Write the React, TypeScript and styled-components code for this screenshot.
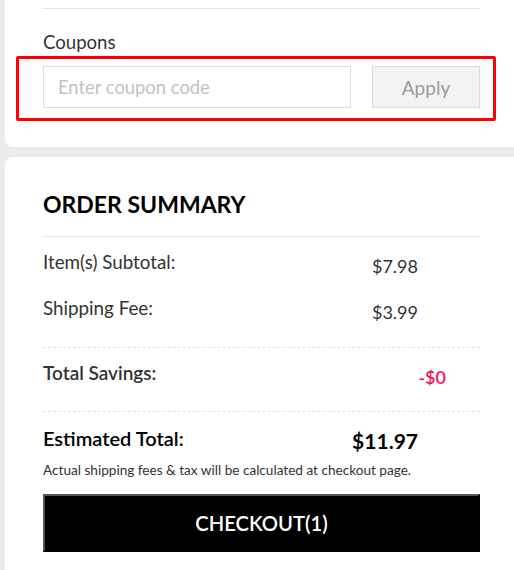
import React from "react";
import styled, { createGlobalStyle } from "styled-components";

const Global = createGlobalStyle`
  html, body { margin: 0; padding: 0; background: #ebebeb; }
  body { font-family: "Lato", "Open Sans", sans-serif; color: #333; }
  * { box-sizing: border-box; }
`;

const Page = styled.div`
  display: flex;
  flex-direction: column;
  gap: 10px;
  padding-left: 5px;
  width: 514px;
  height: 570px;
  overflow: hidden;
`;

const Card = styled.section<{ $top?: boolean }>`
  background: #fff;
  flex: ${(p) => (p.$top ? "0 0 auto" : "1 0 auto")};
  border-radius: ${(p) => (p.$top ? "0 0 0 8px" : "8px 0 0 0")};
  padding: ${(p) => (p.$top ? "8px 34px 39px 38px" : "34px 34px 20px 38px")};
`;

const Divider = styled.div<{ $dashed?: boolean }>`
  border-top: 1px ${(p) => (p.$dashed ? "dashed" : "solid")} #e2e2e2;
`;

const Label = styled.div`
  font-size: 18.6px;
  line-height: 24px;
  color: #333;
  margin: 21px 0 12px;
`;

const CouponRow = styled.div`
  position: relative;
  display: flex;
  gap: 21px;
  height: 42px;
`;

const Highlight = styled.div`
  position: absolute;
  left: -27px;
  right: -16px;
  top: -10px;
  bottom: -13px;
  border: 3px solid #ff0000;
  border-radius: 2px;
  pointer-events: none;
`;

const Input = styled.input`
  flex: 1;
  height: 42px;
  border: 1px solid #dcdcdc;
  padding: 0 14px;
  font-family: inherit;
  font-size: 18.4px;
  outline: none;
  &::placeholder { color: #c2c2c2; }
`;

const ApplyButton = styled.button`
  width: 108px;
  height: 42px;
  background: #f3f3f3;
  border: 1px solid #dcdcdc;
  color: #9a9a9a;
  font-family: inherit;
  font-size: 19px;
  padding: 0;
`;

const Title = styled.h2`
  margin: 0 0 19px;
  font-size: 23px;
  line-height: 26px;
  font-weight: 700;
  color: #000;
`;

const Row = styled.div<{ $pad: number }>`
  display: flex;
  justify-content: space-between;
  align-items: flex-start;
  padding-top: ${(p) => p.$pad}px;
`;

const RowLabel = styled.span<{ $strong?: boolean }>`
  font-size: ${(p) => (p.$strong ? 19 : 18.8)}px;
  line-height: 22px;
  font-weight: ${(p) => (p.$strong ? 600 : 400)};
  color: #333;
`;

const RowValue = styled.span<{ $right: number; $red?: boolean }>`
  font-size: 18px;
  line-height: 22px;
  margin-top: 4px;
  margin-right: ${(p) => p.$right}px;
  color: ${(p) => (p.$red ? "#fb0f4e" : "#333")};
  font-weight: ${(p) => (p.$red ? 600 : 400)};
`;

const Section = styled.div<{ $bottom: number }>`
  padding-bottom: ${(p) => p.$bottom}px;
`;

const TotalLabel = styled.span`
  font-size: 20px;
  line-height: 24px;
  font-weight: 600;
  color: #000;
`;

const TotalValue = styled.span`
  font-size: 21px;
  line-height: 26px;
  font-weight: 700;
  color: #000;
  margin-top: 2px;
  margin-right: 62px;
`;

const Note = styled.p`
  margin: 8px 0 16px;
  font-size: 13.6px;
  line-height: 16px;
  color: #333;
`;

const Checkout = styled.button`
  width: 100%;
  height: 58px;
  background: #000;
  color: #fff;
  border: 2px solid #000;
  border-top-color: #555;
  border-left-color: #555;
  font-family: inherit;
  font-size: 20.2px;
  font-weight: 600;
`;

export default function App() {
  return (
    <>
      <Global />
      <Page>
        <Card $top>
          <Divider />
          <Label>Coupons</Label>
          <CouponRow>
            <Input placeholder="Enter coupon code" />
            <ApplyButton>Apply</ApplyButton>
            <Highlight />
          </CouponRow>
        </Card>
        <Card>
          <Title>ORDER SUMMARY</Title>
          <Divider />
          <Section $bottom={24}>
            <Row $pad={14}>
              <RowLabel>Item(s) Subtotal:</RowLabel>
              <RowValue $right={62}>$7.98</RowValue>
            </Row>
            <Row $pad={20}>
              <RowLabel>Shipping Fee:</RowLabel>
              <RowValue $right={62}>$3.99</RowValue>
            </Row>
          </Section>
          <Divider $dashed />
          <Section $bottom={23}>
            <Row $pad={14}>
              <RowLabel $strong>Total Savings:</RowLabel>
              <RowValue $right={34} $red>-$0</RowValue>
            </Row>
          </Section>
          <Divider $dashed />
          <Row $pad={14}>
            <TotalLabel>Estimated Total:</TotalLabel>
            <TotalValue>$11.97</TotalValue>
          </Row>
          <Note>Actual shipping fees &amp; tax will be calculated at checkout page.</Note>
          <Checkout>CHECKOUT(1)</Checkout>
        </Card>
      </Page>
    </>
  );
}
